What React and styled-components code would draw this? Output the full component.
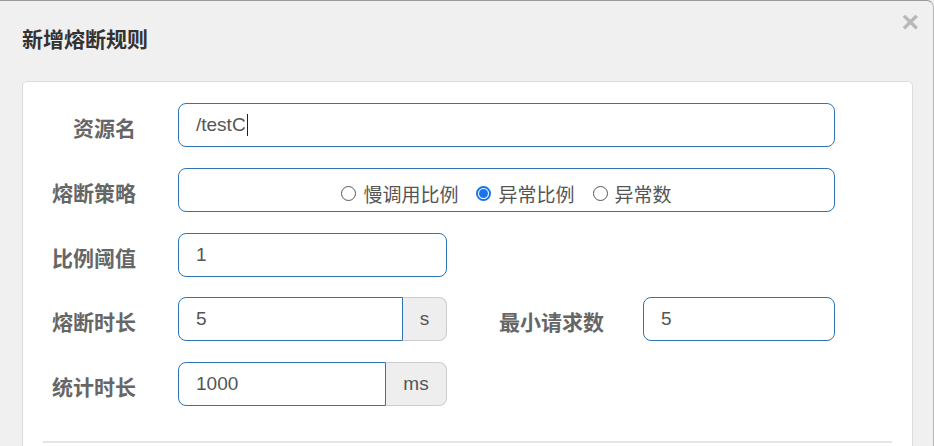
import React from "react";
import styled, { createGlobalStyle } from "styled-components";

const GlobalStyle = createGlobalStyle`
  html, body {
    margin: 0;
    padding: 0;
    background: #f0f0f0;
    overflow: hidden;
  }
  * {
    box-sizing: border-box;
  }
`;

const Modal = styled.div`
  position: relative;
  width: 934px;
  height: 446px;
  background: #f0f0f0;
  border-top: 1px solid #9a9a9a;
  border-right: 1px solid #b5b5b5;
  border-top-right-radius: 7px;
  overflow: hidden;
  font-family: "Liberation Sans", "Noto Sans CJK SC", sans-serif;
`;

const Header = styled.div`
  padding: 26px 22px 0;
  height: 80px;
`;

const Title = styled.h3`
  margin: 0;
  font-family: "Noto Sans CJK SC", sans-serif;
  font-size: 21px;
  line-height: 22px;
  font-weight: bold;
  color: #333;
`;

const Close = styled.span`
  position: absolute;
  top: 4px;
  right: 14px;
  font-family: "Liberation Sans", sans-serif;
  font-size: 30px;
  font-weight: bold;
  color: #b8b8b8;
  line-height: 34px;
`;

const Card = styled.div`
  margin: 0 20px 0 22px;
  background: #fff;
  border: 1px solid #dcdcdc;
  border-radius: 5px;
  padding: 21px 20px 0 20px;
  height: 400px;
`;

const Row = styled.div`
  display: flex;
  align-items: center;
  height: 44px;
  margin-bottom: ${(p) => (p.$tight ? 20 : 21)}px;
`;

const Label = styled.label`
  width: ${(p) => p.$width || 93}px;
  margin-right: ${(p) => p.$gap || 42}px;
  padding-top: 4px;
  text-align: right;
  font-family: "Noto Sans CJK SC", sans-serif;
  font-size: 21px;
  font-weight: bold;
  color: #666;
  flex-shrink: 0;
`;

const Box = styled.div`
  display: flex;
  align-items: center;
  width: ${(p) => p.$width}px;
  height: 44px;
  padding: 0 17px;
  border: 1px solid #2f74b5;
  border-radius: ${(p) => (p.$addon ? "8px 0 0 8px" : "8px")};
  font-size: 19px;
  color: #555;
  flex-shrink: 0;
`;

const Caret = styled.span`
  display: inline-block;
  width: 1px;
  height: 22px;
  margin-left: 1px;
  background: #222;
`;

const Addon = styled.span`
  display: flex;
  align-items: center;
  justify-content: center;
  width: ${(p) => p.$width}px;
  height: 44px;
  background: #eee;
  border: 1px solid #ccc;
  border-left: none;
  border-radius: 0 8px 8px 0;
  font-size: 19px;
  color: #555;
  flex-shrink: 0;
`;

const Group = styled.div`
  display: flex;
  width: 269px;
  flex-shrink: 0;
`;

const RadioBox = styled.div`
  display: flex;
  align-items: center;
  justify-content: center;
  gap: 18px;
  width: 657px;
  height: 44px;
  padding-top: 7px;
  border: 1px solid #2f74b5;
  border-radius: 8px;
  flex-shrink: 0;
`;

const RadioItem = styled.label`
  display: flex;
  align-items: center;
  gap: 7px;
  font-family: "Noto Sans CJK SC", sans-serif;
  font-size: 19px;
  color: #555;
`;

const Dot = styled.span`
  width: 15px;
  height: 15px;
  border-radius: 50%;
  border: ${(p) => (p.$checked ? "2px solid #1a73e8" : "1.5px solid #555")};
  background: #fff;
  display: flex;
  align-items: center;
  justify-content: center;

  &::after {
    content: "";
    display: ${(p) => (p.$checked ? "block" : "none")};
    width: 9px;
    height: 9px;
    border-radius: 50%;
    background: #1a73e8;
  }
`;

const Divider = styled.div`
  margin-top: 35px;
  height: 2px;
  width: 849px;
  background: #e5e5e5;
`;

const Radio = ({ checked, children }) => (
  <RadioItem>
    <Dot $checked={checked} />
    {children}
  </RadioItem>
);

export default function App() {
  return (
    <>
      <GlobalStyle />
      <Modal>
        <Close>×</Close>
        <Header>
          <Title>新增熔断规则</Title>
        </Header>
        <Card>
          <Row>
            <Label>资源名</Label>
            <Box $width={657}>
              /testC<Caret />
            </Box>
          </Row>
          <Row>
            <Label>熔断策略</Label>
            <RadioBox>
              <Radio>慢调用比例</Radio>
              <Radio checked>异常比例</Radio>
              <Radio>异常数</Radio>
            </RadioBox>
          </Row>
          <Row $tight>
            <Label>比例阈值</Label>
            <Box $width={269}>1</Box>
          </Row>
          <Row>
            <Label>熔断时长</Label>
            <Group>
              <Box $width={225} $addon>5</Box>
              <Addon $width={44}>s</Addon>
            </Group>
            <Label $width={157} $gap={39}>最小请求数</Label>
            <Box $width={192}>5</Box>
          </Row>
          <Row $tight>
            <Label>统计时长</Label>
            <Group>
              <Box $width={208} $addon>1000</Box>
              <Addon $width={61}>ms</Addon>
            </Group>
          </Row>
          <Divider />
        </Card>
      </Modal>
    </>
  );
}
